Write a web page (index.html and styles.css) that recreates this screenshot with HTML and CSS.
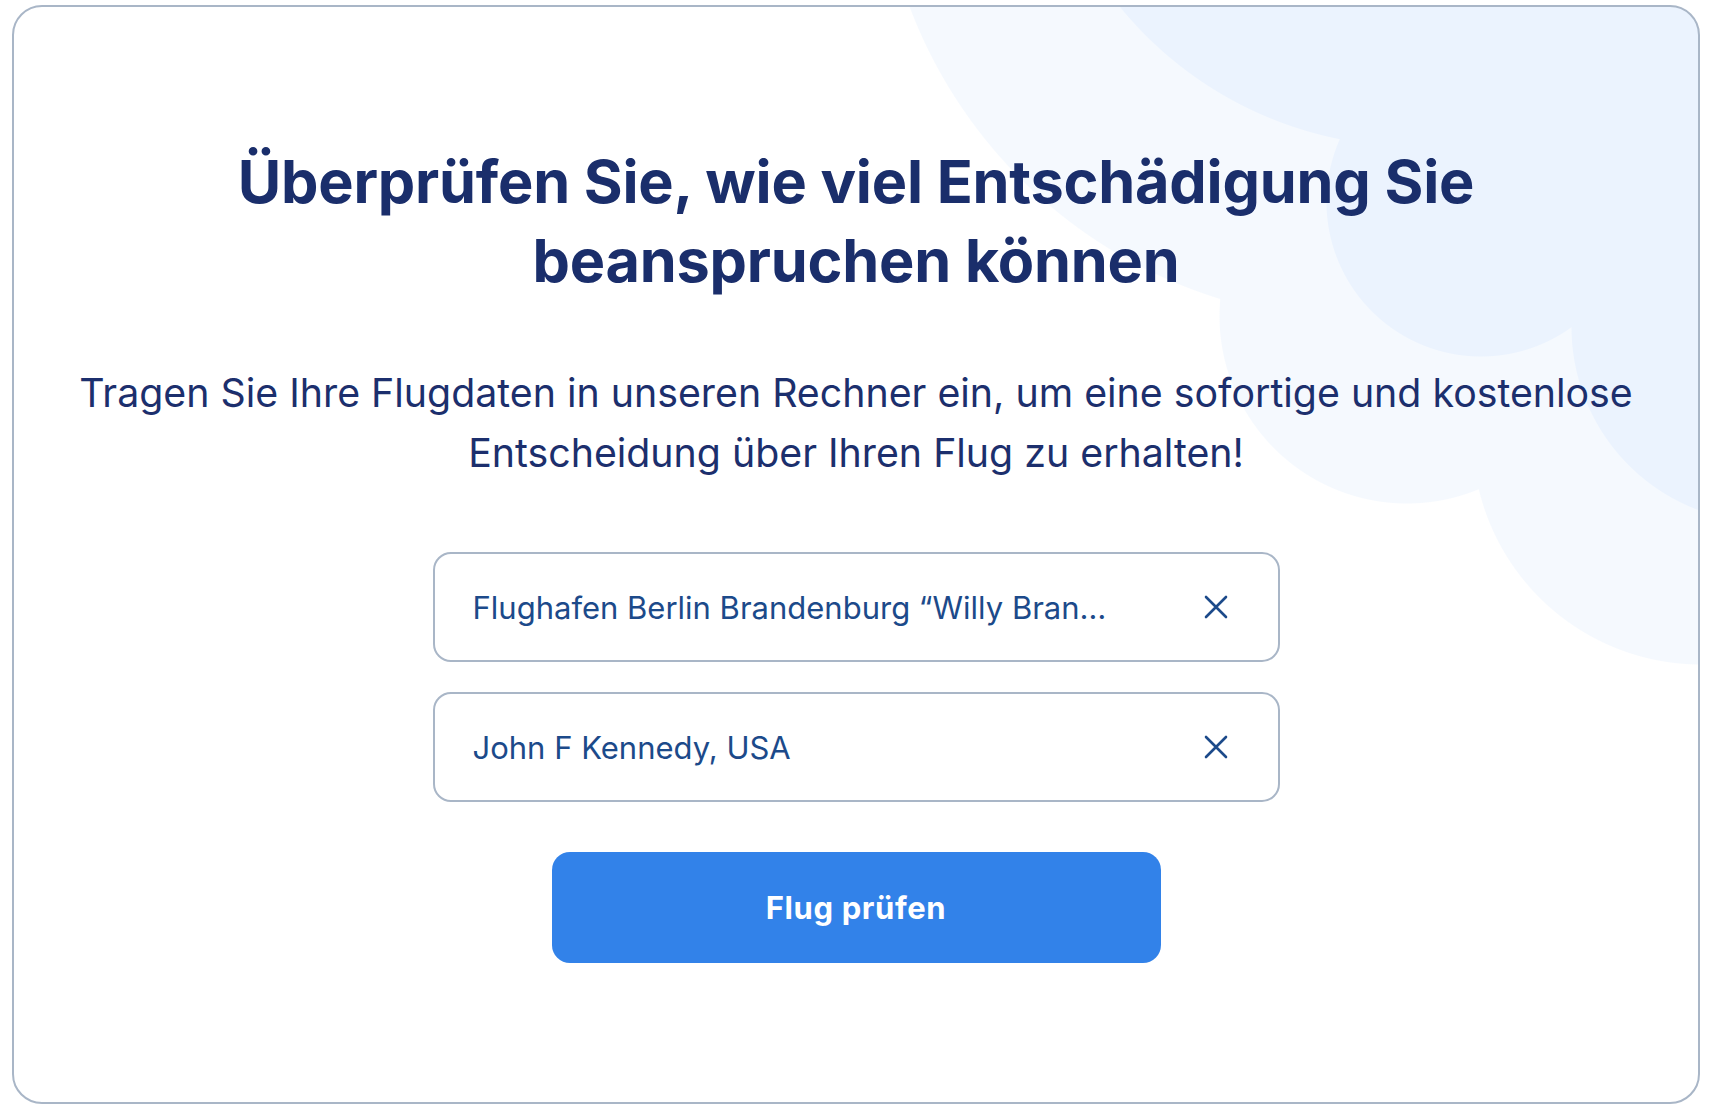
FILE: index.html
```html
<!DOCTYPE html>
<html lang="de">
<head>
<meta charset="utf-8">
<title>Entschädigung prüfen</title>
<link rel="stylesheet" href="styles.css">
</head>
<body>
<section class="card">
  <h1 class="title">Überprüfen Sie, wie viel Entschädigung Sie<br>beanspruchen können</h1>
  <p class="lead">Tragen Sie Ihre Flugdaten in unseren Rechner ein, um eine sofortige und kostenlose<br>Entscheidung über Ihren Flug zu erhalten!</p>
  <form class="form">
    <div class="field">
      <span class="field-text">Flughafen Berlin Brandenburg “Willy Bran…</span>
      <button type="button" class="clear" aria-label="Löschen">
        <svg viewBox="0 0 24 24" width="24" height="24"><path d="M2 2 L22 22 M22 2 L2 22" stroke="currentColor" stroke-width="2.6" stroke-linecap="round" fill="none"/></svg>
      </button>
    </div>
    <div class="field">
      <span class="field-text">John F Kennedy, USA</span>
      <button type="button" class="clear" aria-label="Löschen">
        <svg viewBox="0 0 24 24" width="24" height="24"><path d="M2 2 L22 22 M22 2 L2 22" stroke="currentColor" stroke-width="2.6" stroke-linecap="round" fill="none"/></svg>
      </button>
    </div>
    <button type="button" class="submit">Flug prüfen</button>
  </form>
</section>
</body>
</html>
```

FILE: styles.css
```css
* { box-sizing: border-box; }

html, body {
  margin: 0;
  padding: 0;
  background: #ffffff;
}

body {
  font-family: "Inter", "Noto Sans", "Liberation Sans", sans-serif;
  color: #1b2e6c;
}

.card {
  margin: 5px 0 0 12px;
  width: 1688px;
  height: 1099px;
  border: 2px solid #a9b6c7;
  border-radius: 30px;
  overflow: hidden;
  display: flex;
  flex-direction: column;
  align-items: center;
  padding-top: 135px;
  background-color: #ffffff;
  background-image:
    radial-gradient(circle 380px at 1400px -240px, #ebf3fe 379px, rgba(235,243,254,0) 380px),
    radial-gradient(circle 251px at 1687px 80px, #ebf3fe 250px, rgba(235,243,254,0) 251px),
    radial-gradient(circle 155px at 1467px 195px, #ebf3fe 154px, rgba(235,243,254,0) 155px),
    radial-gradient(circle 196px at 1753px 320px, #ebf3fe 195px, rgba(235,243,254,0) 196px),
    radial-gradient(circle 485px at 1349px -171px, #f5f9fe 484px, rgba(245,249,254,0) 485px),
    radial-gradient(circle 188px at 1393px 309px, #f5f9fe 187px, rgba(245,249,254,0) 188px),
    radial-gradient(circle 229px at 1687px 429px, #f5f9fe 228px, rgba(245,249,254,0) 229px);
  background-repeat: no-repeat;
}

.title {
  margin: 0;
  font-size: 59.4px;
  line-height: 79px;
  font-weight: 700;
  text-align: center;
  color: #1a2e6b;
  letter-spacing: -0.2px;
}

.lead {
  margin: 63px 0 0;
  font-size: 39.3px;
  line-height: 60px;
  font-weight: 400;
  text-align: center;
  color: #1c2f6d;
}

.form {
  margin-top: 69px;
  width: 847px;
  display: flex;
  flex-direction: column;
  align-items: center;
  gap: 30px;
}

.field {
  width: 100%;
  height: 110px;
  border: 2px solid #a9b6c7;
  border-radius: 18px;
  background: rgba(255,255,255,0.9);
  display: flex;
  align-items: center;
  justify-content: space-between;
  padding: 0 50px 0 38px;
}

.field-text {
  font-size: 31px;
  color: #1c4a8a;
  white-space: nowrap;
  overflow: hidden;
  text-overflow: ellipsis;
}

.clear {
  border: 0;
  background: none;
  padding: 0;
  width: 24px;
  height: 24px;
  color: #1c4a8a;
  display: flex;
  cursor: pointer;
}

.clear svg { display: block; }

.submit {
  margin-top: 20px;
  width: 609px;
  height: 111px;
  border: 0;
  border-radius: 18px;
  background: #3282e9;
  color: #ffffff;
  font-family: "Inter", "Noto Sans", "Liberation Sans", sans-serif;
  font-size: 31px;
  font-weight: 700;
  letter-spacing: 0.6px;
  cursor: pointer;
}
```
